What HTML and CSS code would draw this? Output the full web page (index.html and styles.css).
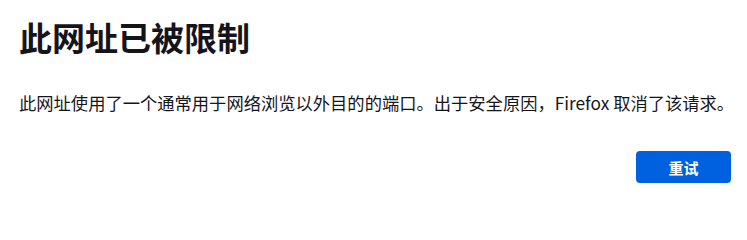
FILE: index.html
```html
<!DOCTYPE html>
<html lang="zh-CN">
<head>
<meta charset="utf-8">
<title>此网址已被限制</title>
<link rel="stylesheet" href="styles.css">
</head>
<body>
<main class="page">
  <h1 class="title">此网址已被限制</h1>
  <p class="desc">此网址使用了一个通常用于网络浏览以外目的的端口。出于安全原因，Firefox 取消了该请求。</p>
  <div class="actions">
    <button class="retry" type="button">重试</button>
  </div>
</main>
</body>
</html>
```
FILE: styles.css
```css
html, body {
  margin: 0;
  padding: 0;
  background: #ffffff;
}

body {
  font-family: "Noto Sans CJK SC", "Noto Sans", sans-serif;
  color: #15141a;
}

.page {
  padding: 13px 16px 0 19px;
  display: flex;
  flex-direction: column;
}

.title {
  margin: 0;
  font-size: 33px;
  font-weight: 700;
  line-height: 48px;
}

.desc {
  margin: 29px -16px 0 0;
  font-size: 17.3px;
  line-height: 26px;
  white-space: nowrap;
}

.actions {
  display: flex;
  justify-content: flex-end;
  margin-top: 35px;
}

.retry {
  width: 95px;
  height: 32px;
  border: none;
  border-radius: 4px;
  background: #0061e0;
  color: #ffffff;
  font-family: "Noto Sans CJK SC", "Noto Sans", sans-serif;
  font-size: 15px;
  font-weight: 700;
  padding: 0;
}
```
